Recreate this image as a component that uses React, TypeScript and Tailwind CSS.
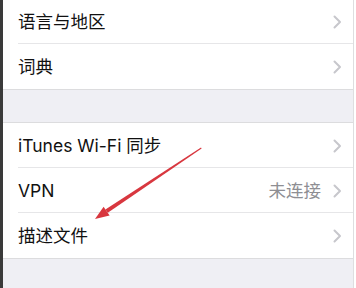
import React from "react";

const Chevron = () => (
  <svg width="9" height="14" viewBox="0 0 9 14" className="shrink-0">
    <path d="M1.5 1.5 L7 7 L1.5 12.5" fill="none" stroke="#c7c7cc" strokeWidth="2" strokeLinecap="round" strokeLinejoin="round" />
  </svg>
);

const Row = ({ label, value, sep = true, h = "h-[45px]" }: { label: string; value?: string; sep?: boolean; h?: string }) => (
  <div className={`relative flex items-center ${h} pl-[15px] pr-[11px] bg-white`}>
    <span className="flex-1 text-[17.5px] text-[#111] leading-none">{label}</span>
    {value && <span className="text-[17.5px] text-[#8e8e93] leading-none mr-[12px]">{value}</span>}
    <Chevron />
    {sep && <div className="absolute bottom-0 left-[15px] right-0 h-px bg-[#e6e6e8]" />}
  </div>
);

export default function App() {
  return (
    <div
      className="relative w-[356px] h-[288px] flex overflow-hidden bg-[#efeff4]"
      style={{ fontFamily: '"Inter", "Noto Sans CJK SC", sans-serif' }}
    >
      <div className="w-[3px] bg-[#3a3a3a]" />
      <div className="flex-1 flex flex-col">
        <Row label="语言与地区" h="h-[44px]" />
        <Row label="词典" sep={false} />
        <div className="h-px bg-[#dcdcde]" />
        <div className="h-[32px] bg-[#efeff4]" />
        <div className="h-px bg-[#dcdcde]" />
        <Row label="iTunes Wi-Fi 同步" />
        <Row label="VPN" value="未连接" />
        <Row label="描述文件" sep={false} />
        <div className="h-px bg-[#dcdcde]" />
        <div className="flex-1 bg-[#efeff4]" />
      </div>
      <div className="w-[3px] bg-white border-l border-[#dedee0]" />
      <svg className="absolute inset-0 pointer-events-none" width="356" height="288" viewBox="0 0 356 288">
        <polygon points="201,147.6 201.6,148.6 107.8,212.8 105.4,209.6" fill="#d8373f" />
        <polygon points="95,219 109.6,215.6 103.6,206.8" fill="#d8373f" />
      </svg>
    </div>
  );
}
